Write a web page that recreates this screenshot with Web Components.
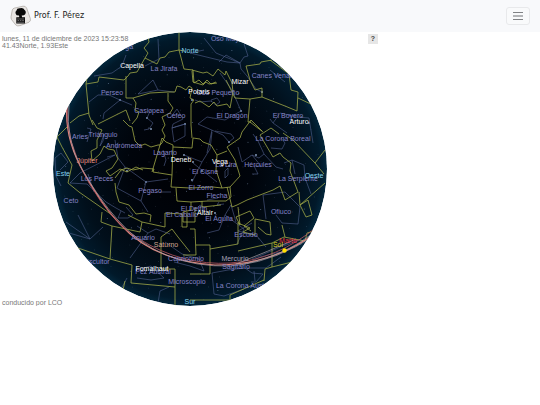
<!DOCTYPE html>
<html lang="es">
<head>
<meta charset="utf-8">
<title>Prof. F. Pérez</title>
<style>
body{margin:0;background:#fff;font-family:"Liberation Sans",Arial,sans-serif}
</style>
</head>
<body>
<site-header>Prof. F. Pérez</site-header>
<sky-panel>
  <span slot="info">lunes, 11 de diciembre de 2023 15:23:58<br>41.43Norte, 1.93Este</span>
  <star-map></star-map>
  <span slot="credit">conducido por LCO</span>
</sky-panel>

<template id="header-t">
<style>
:host{display:block;background:#f8f9fb}
header{display:flex;align-items:center;justify-content:space-between;height:32px;padding:0 10px;box-sizing:border-box}
a{display:flex;align-items:center;gap:2px;color:#222;text-decoration:none;font:8px/12px "DejaVu Sans",sans-serif}
button{display:grid;place-items:center;width:24px;height:18px;padding:0;background:#f9fafb;border:1px solid #e8e9eb;border-radius:3px}
svg{display:block}
</style>
<header>
  <a href="#">
    <svg width="22" height="22" viewBox="0 0 22 22" aria-hidden="true">
      <path d="M4 3.200L13 1.200Q15.500 .8 16.600 3L20.300 13.500Q21 16 19 17.200L10 20.600Q7.500 21.500 5.800 20L1.500 14.500Q.8 13 1.100 11.500L2.300 5Q2.800 3.600 4 3.200Z" fill="#e9e6e3" stroke="#b0aba6" stroke-width=".8"/>
      <path d="M6.600 10.300Q4.300 7.500 6.500 5.600Q6.700 2.900 10 3.200Q13.500 2.500 14.600 5.100Q16.800 7 15 9.400Q13.500 10.700 11.800 10.300L12 12.200H15V18.600H6.300V12.200H9.300L9 10.600Z" fill="#080808"/>
      <path d="M7 14h7.300M7.500 15.500h1.600m.8 0h1.500m.8 0h1.700M7 17.200h7.300" stroke="#a5a5a5" stroke-width=".6"/>
    </svg>
    <slot></slot>
  </a>
  <button aria-label="Menú"><svg width="12" height="12" viewBox="0 0 12 12"><path d="M1 2.500h10M1 9.500h10" stroke="#808285"/><path d="M1 6h10" stroke="#b4b6b8" stroke-width="2"/></svg></button>
</header>
</template>

<template id="panel-t">
<style>
:host{display:grid;max-width:378px;grid-template-columns:1fr auto;color:#777;font-size:7px;line-height:7px}
::slotted(star-map){grid-area:1/1/2/3;justify-self:center;margin-left:2px}
.info,.credit{grid-area:1/1/2/2;z-index:1}
.info{align-self:start;padding:3px 2px}
.credit{align-self:end;padding:0 2px}
button{grid-area:1/2/2/3;z-index:1;align-self:start;width:10px;height:10px;margin-top:2px;padding:0;border:0;background:#e6e6e6;color:#444;font:bold 7px/10px "Liberation Sans",sans-serif}
</style>
<slot></slot>
<div class="info"><slot name="info"></slot></div>
<div class="credit"><slot name="credit"></slot></div>
<button aria-label="Ayuda">?</button>
</template>

<template id="map-t">
<style>
:host{display:block;width:100%;max-width:274px}
svg{display:block;width:100%;height:auto}
text{font:7px "Liberation Sans",Arial,sans-serif;text-anchor:middle}
.con{fill:#8584c6}.star{fill:#fff}.dir{fill:#86d3ee}
.fig{fill:none;stroke:#53618f;stroke-width:.6}
.bound{fill:none;stroke:#a0a848;stroke-width:.8;stroke-linejoin:round}
</style>
<svg viewBox="53 32 274 274" role="img" aria-label="Mapa del cielo">
  <defs>
    <radialGradient id="g"><stop offset="0" stop-color="#000004"/><stop offset=".45" stop-color="#00040b"/><stop offset=".8" stop-color="#010f1b"/><stop offset=".95" stop-color="#01192a"/><stop offset="1" stop-color="#03273c"/></radialGradient>
    <clipPath id="c"><circle cx="190" cy="169" r="137"/></clipPath>
  </defs>
  <g clip-path="url(#c)">
    <circle cx="190" cy="169" r="137" fill="url(#g)"/>
    <g id="dots" fill="#8fa8c8"></g>
    <path class="fig" d="M126 55L122 66L112 73L94 76M158 39L159 59L145 66M138 94L153 80L158 90L174 92M138 94L158 90M89 102L98 95L109 95L120 100L132 105M120 100L104 113L103 119M204 38L216 53L240 63L241 69L247 76L256 89L262 92M190 53L227 62L240 63M204 50L190 53M219 62L226 55L240 63L244 57L248 56L244 44M211 100L217 98L220 102L216 105L211 101L200 102L195 100M220 73L232 90L241 111L225 120L207 117L198 124L223 135L229 142L234 138L231 134L215 131M170 118L177 109L183 119L173 124L172 128L185 124M144 130L149 129L153 123L147 118L151 109M172 128L174 142L185 136L185 124L172 128M164 166L166 160L163 150M87 142L91 129L87 128M100 146L104 134L103 141ZM115 140L118 158L125 167L117 188L141 201L146 182L125 167M146 182L168 179M141 201L148 212M160 192L171 192M61 186L56 176L55 158L61 153L68 162L60 170M70 183L80 173L115 155L107 157M70 183L87 184L106 202L116 208L125 213M88 174L94 192M192 182L202 162L210 149L212 132M193 163L203 171L217 182M202 162L184 155M207 153L212 130M225 171L228 168L228 175L225 178ZM238 147L242 162L252 155L259 158L264 154L258 141L253 134M252 155L261 166L254 166L258 174L252 174M264 154L276 167L283 169M271 148L282 149L285 143L281 138M292 160L304 165L305 178L311 194M284 163L292 160L295 174M266 219L263 195L285 192L300 207L298 224L282 223L276 215M273 123L280 113L297 117L309 118L313 143M270 119L273 123L287 133M285 82L270 70M207 200L218 198M219 202L217 205L224 204M231 205L225 215L219 230L207 233M225 215L244 229L237 244M231 205L236 222M194 212L200 205L205 208M66 222L90 239L103 227M69 233L90 239L78 215M121 211L118 218L128 218L133 215L126 207M137 226L148 233L156 229L170 234M148 233L130 258M165 242L182 254L199 259L204 271L190 266L174 262M127 278L121 289M136 270L151 266L164 278L151 280L137 278M158 303L160 291L169 287M214 294L212 273L228 270L245 268L252 273L263 274L256 282L251 282M214 294L224 296L244 289M252 259L276 249L290 242M247 264L260 257L280 252M247 268L266 268L281 257M254 271L255 281M252 223L238 231L257 236L266 247M284 246L301 239"/>
    <path class="bound" d="M87 78L86 84L98 82L99 77L124 80L128 76L130 73L137 72L145 58L157 64L160 58L165 57L169 52L179 50L184 69L193 70L194 83L199 80L203 84L207 80L211 84L216 82M147 33L149 42L144 48L148 53L145 58M179 32L179 50L184 51M86 84L89 115L93 125M70 123L79 116L89 113M98 124L110 118L126 110L130 121M126 76L126 98L133 98L150 93L168 92L175 92L177 86L181 87L186 90L189 86L192 88L190 98L194 100L191 104L191 125L192 138M133 98L136 103L135 110L139 112L137 118L132 124M168 93L168 101L173 108L170 113L162 117L165 125L162 130L165 136L162 143L160 145L162 138L166 142L173 145L172 175L153 172L154 169L142 168L133 170L127 168L121 170L115 178M192 70L203 73L207 72L213 76L218 69L225 75L226 71L232 83L233 92L230 108L227 104L217 106L214 102L209 107L200 101L195 103M192 71L193 82L203 85L206 82L209 84L217 83M226 80L235 98L250 99M272 60L261 62L260 64L246 66L250 80L255 90L262 88L262 97L285 106L297 111L298 92L291 90L289 74L270 60M298 98L315 106M262 97L250 99L249 110L248 122L251 122M57 137L67 127M57 137L62 147L72 165L68 183L79 192L112 215M92 120L97 128L102 130L97 140L97 148L91 151L92 161L100 154L104 146L108 149L114 150L118 159L112 168L106 171L110 176L120 169L127 172L136 167L143 170M115 183L116 192L119 202L129 205L136 214L144 213M123 120L129 126L132 127L135 141L140 146L145 144L151 147L158 145L160 145M160 145L152 172M173 147L192 148L193 138L200 139L203 142L211 145L217 155L216 170L222 188L230 187L240 176L235 160L227 147L240 138L242 132L251 120L262 131M217 155L227 151M172 175L171 187L190 188L213 187L222 188M176 188L177 201L191 202L208 201L226 201L231 197L230 187M202 201L202 207L221 205M191 202V210L183 212V222L195 222V207M227 187L232 207L237 205L247 200L273 190L280 186L285 200L298 192L290 171L291 163L283 157L280 153L273 157L260 135L271 128L279 134M250 122L263 132M283 133L293 140L315 163L325 150M300 205L325 183M315 163L324 174M300 205L299 192M300 205L308 200L312 215L306 217L300 205M238 207L240 225L236 217L250 211L254 218L244 226L251 231M102 212L101 222L112 226L110 259L78 248M110 259L132 265L131 283L175 287M125 281L123 290M112 226L140 232L142 222L128 215M142 222L165 227V213L182 214L182 227H187V212M161 237V269H175V306M161 237L172 229L178 237L190 252M144 213L151 215L150 222M195 229L196 255H183M196 245H210V274H190M210 249L238 244V222M195 229L190 229M238 251L272 243V267L265 269L264 281M238 223L250 228L243 232L255 235L255 219L270 222L271 235L266 234L258 227M272 243L284 237L305 241L307 233L324 228M272 267L300 260M190 300H230V295L264 280M282 225L285 237"/>
    <path d="M67 105Q64 138 84 173T120 224Q153 261 215 265Q275 265 318 231" fill="none" stroke="#dd8179" stroke-width="1.200"/>
    <path d="M67 102Q65 142 89 183T139 239Q183 266 230 263T318 226" fill="none" stroke="#b85560" stroke-width=".8"/>
    <path d="M69 105Q65 139 82 169T117 219Q159 268 231 266Q283 259 318 229M236 264Q269 251 296 239M240 265Q277 260 314 236" fill="none" stroke="#aaa0a6" stroke-width=".7"/>
    <g id="labels"></g>
    <circle cx="284.500" cy="250.500" r="2.200" fill="#ffe100"/>
  </g>
</svg>
</template>

<script>
const stamp = (el, id) => {
  const root = el.attachShadow({mode: 'open'});
  root.append(document.getElementById(id).content.cloneNode(true));
  return root;
};
customElements.define('site-header', class extends HTMLElement {
  constructor() { super(); stamp(this, 'header-t'); }
});
customElements.define('sky-panel', class extends HTMLElement {
  constructor() { super(); stamp(this, 'panel-t'); }
});

const NS = 'http://www.w3.org/2000/svg';
const LABELS = {
  con: [['Auriga',123,49],['Oso Mayor',228,41],['La Jirafa',164,71],['Canes Venatici',275,78],['Perseo',112,95],['Oso Pequeño',218,95],
    ['Casiopea',149,113],['Cefeo',176,118],['El Dragón',232,118],['El Boyero',288,118],['Aries',80,139],['Triángulo',103,137],['Andrómeda',124,148],
    ['Lagarto',165,155],['La Corona Boreal',283,141],['La Lira',226,167],['Hércules',258,167],['El Cisne',205,174],['Los Peces',97,181],
    ['Pegaso',150,193],['El Zorro',201,190],['Flecha',217,198],['La Serpiente',298,181],['Ceto',71,203],['Ofiuco',281,214],['El Delfín',194,211],
    ['El Caballo',182,217],['El Águila',219,221],['Escudo',246,237],['Acuario',143,240],['Capricornio',186,261],['Escultor',97,264],
    ['Pez Austral',153,274],['Sagitario',236,269],['Microscopio',187,284],['La Corona Austral',244,288]],
  star: [['Capella',132,68],['Mizar',240,84],['Polaris',199,94],['Arturo',299,124],['Deneb',181,162],['Vega',220,164],['Altair',205,215],['Fomalhaut',152,271]],
  dir: [['Norte',190,53],['Este',63,176],['Oeste',314,178],['Sur',190,304]],
};
const PLANETS = [['Júpiter',87,163,'#e58a7e'],['Saturno',166,247,'#cfa590'],['Mercurio',235,261,'#a8a0b8'],['Marte',288,243,'#e0303c'],['Sol',278,247,'#d9cc20']];
const STARS = [[184,155],[193,162],[192,180],[229,166],[215,213],[127,171],[120,100],[192,100],[309,123],[146,182],[185,124],[147,118],[151,129],[262,92],[241,111],[229,142],[202,171],[256,155]];

customElements.define('star-map', class extends HTMLElement {
  constructor() {
    super();
    const root = stamp(this, 'map-t');
    const labels = root.getElementById('labels'), dots = root.getElementById('dots');
    const text = (t, x, y) => {
      const n = document.createElementNS(NS, 'text');
      n.textContent = t; n.setAttribute('x', x); n.setAttribute('y', y);
      labels.append(n);
      return n;
    };
    const put = kind => LABELS[kind].forEach(l => text(...l).setAttribute('class', kind));
    put('con');
    PLANETS.forEach(([t, x, y, c]) => text(t, x, y).setAttribute('fill', c));
    put('star'); put('dir');
    const dot = (x, y, r, o) => {
      const n = document.createElementNS(NS, 'circle');
      n.setAttribute('cx', x); n.setAttribute('cy', y); n.setAttribute('r', r); n.setAttribute('opacity', o);
      dots.append(n);
    };
    for (let i = 0; i < 240; i++) {
      const a = i * 2.4, r = 8.600 * Math.sqrt(i);
      dot((190 + r * Math.cos(a) + i * 7 % 5).toFixed(1), (169 + r * Math.sin(a) + i * 5 % 7).toFixed(1), i % 6 ? .3 : .5, .6);
    }
    STARS.forEach(([x, y]) => dot(x, y, .9, 1));
  }
});
</script>
</body>
</html>
